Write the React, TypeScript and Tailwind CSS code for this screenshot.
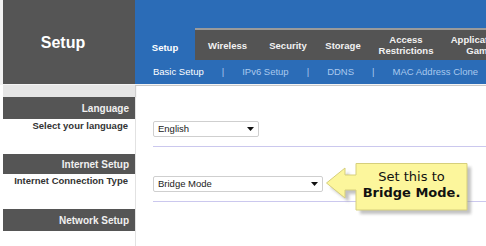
import type { ReactNode } from "react";

const tabs = [
  { label: "Setup", w: "w-[60px]", active: true },
  { label: "Wireless", w: "w-[65px]" },
  { label: "Security", w: "w-[56px]" },
  { label: "Storage", w: "w-[54px]" },
  { label: "Access\nRestrictions", w: "w-[72px]" },
  { label: "Applications &\nGaming", w: "w-[84px]" },
];

const subnav = ["Basic Setup", "IPv6 Setup", "DDNS", "MAC Address Clone"];

function Select({ value, width }: { value: string; width: string }) {
  return (
    <div className={`${width} h-[16px] flex items-center justify-between bg-white border border-[#cfcfcf] rounded-[2px] pl-[4px] pr-[4px] text-[9.5px] text-[#222]`}>
      <span>{value}</span>
      <svg width="7" height="4" viewBox="0 0 7 4">
        <polygon points="0,0 7,0 3.5,4" fill="#111" />
      </svg>
    </div>
  );
}

function SectionBar({ title, h }: { title: string; h: string }) {
  return (
    <div className="flex">
      <div className="w-[135px] shrink-0 pl-[3px] bg-white">
        <div className={`${h} bg-[#555555] text-[#f0f0f0] font-bold text-[10px] flex items-center justify-end pr-[6px]`}>
          {title}
        </div>
      </div>
      <div className="flex-1 border-l border-[#e2e2e2]" />
    </div>
  );
}

function FieldRow({ label, children, line }: { label: string; children: ReactNode; line: string }) {
  return (
    <div className="flex h-[35px]">
      <div className="w-[135px] shrink-0 pl-[3px] bg-white">
        <div className="pr-[7px] pt-[1px] text-right font-bold text-[9.5px] text-[#333] leading-[12px]">{label}</div>
      </div>
      <div className="flex-1 border-l border-[#e2e2e2] pl-[17px] pt-[2px]">
        {children}
        <div className={`${line} border-t border-[#cbc8ee]`} />
      </div>
    </div>
  );
}

export default function App() {
  return (
    <div className="relative w-[486px] h-[246px] overflow-hidden bg-white" style={{ fontFamily: '"Liberation Sans", Arial, sans-serif' }}>
      {/* header */}
      <div className="flex h-[84px]">
        <div className="w-[135px] shrink-0 pl-[3px] bg-[#f2f2f2]">
          <div className="h-full bg-[#555555] flex items-center justify-center pr-[12px] pt-[1px] text-white font-bold text-[16px]">
            Setup
          </div>
        </div>
        <div className="flex-1 min-w-0 overflow-hidden bg-[#2b6cb7] flex flex-col">
          <div className="h-[28px]" />
          <div className="h-[32px] flex">
            {tabs.map((t) => (
              <div
                key={t.label}
                className={`${t.w} shrink-0 flex items-center justify-center text-center whitespace-pre font-bold text-[9.5px] leading-[11px] ${
                  t.active ? "bg-[#2b6cb7] text-white pt-[6px]" : "bg-[#545454] text-[#f2f2f2] border-t-2 border-[#9a9a9a]"
                }`}
              >
                {t.label}
              </div>
            ))}
          </div>
          <div className="h-[24px] flex items-center pl-[18px] gap-[18px] text-[9.5px] whitespace-nowrap">
            {subnav.map((s, i) => (
              <div key={s} className="flex items-center gap-[18px]">
                {i > 0 && <span className="text-[#a9c9ee]">|</span>}
                <span className={i === 0 ? "text-white" : "text-[#a9c9ee]"}>{s}</span>
              </div>
            ))}
          </div>
        </div>
      </div>

      {/* separator */}
      <div className="h-[1px] bg-[#f4f4f4]" />
      <div className="flex h-[12px]">
        <div className="w-[135px] shrink-0 pl-[3px] bg-white">
          <div className="h-full bg-[#e6e6e6] shadow-[1px_1px_1px_#cfcfcf]" />
        </div>
        <div className="flex-1">
          <div className="h-[1px] bg-[#c8c8c8]" />
        </div>
      </div>

      {/* body */}
      <SectionBar title="Language" h="h-[22px]" />
      <FieldRow label="Select your language" line="mt-[9px]">
        <Select value="English" width="w-[106px]" />
      </FieldRow>
      <SectionBar title="Internet Setup" h="h-[20px]" />
      <FieldRow label="Internet Connection Type" line="mt-[9px]">
        <Select value="Bridge Mode" width="w-[170px]" />
      </FieldRow>
      <SectionBar title="Network Setup" h="h-[22px]" />
      <div className="flex h-[20px]">
        <div className="w-[135px] shrink-0" />
        <div className="flex-1 border-l border-[#e2e2e2]" />
      </div>

      {/* callout */}
      <div className="absolute left-[326px] top-[163px] w-[148px] h-[54px]">
        <svg className="absolute left-0 top-0" width="148" height="54" viewBox="0 0 148 54">
          <defs>
            <filter id="sh" x="-20%" y="-20%" width="140%" height="140%">
              <feGaussianBlur stdDeviation="1.5" />
            </filter>
          </defs>
          <polygon
            points="34,4 145,4 145,51 34,51 34,31 23,31 23,39 4,24 23,9 23,16 34,16"
            fill="#9a9a9a"
            opacity="0.6"
            filter="url(#sh)"
          />
          <polygon
            points="30,0.5 141,0.5 141,47 30,47 30,27 19,27 19,35 0.5,20 19,5 19,12 30,12"
            fill="#fcf69c"
            stroke="#d6cf7c"
            strokeWidth="1"
          />
        </svg>
        <div
          className="absolute left-[30px] top-[6px] w-[111px] text-center text-[13px] leading-[16px] text-[#111]"
          style={{ fontFamily: '"DejaVu Sans", Verdana, sans-serif' }}
        >
          <div>Set this to</div>
          <div className="font-bold">Bridge Mode.</div>
        </div>
      </div>
    </div>
  );
}
